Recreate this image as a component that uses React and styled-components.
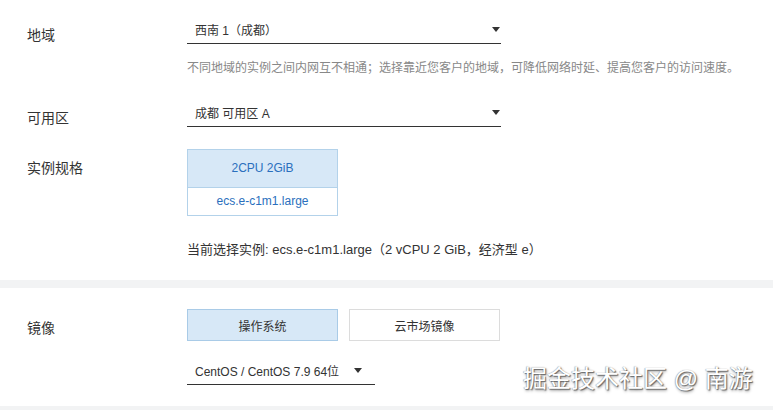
import React from "react";
import styled, { createGlobalStyle } from "styled-components";

const GlobalStyle = createGlobalStyle`
  html, body {
    margin: 0;
    padding: 0;
    background: #fff;
  }
  body {
    font-family: "Liberation Sans", "Noto Sans CJK SC", sans-serif;
    color: #333;
  }
`;

const App = () => {
  return (
    <Page>
      <GlobalStyle />
      <Section pt={16} pb={20}>
        <Row>
          <Label>地域</Label>
          <Field>
            <Select width={314} pr={1}>
              <span>西南 1（成都）</span>
              <Caret />
            </Select>
            <Hint>
              不同地域的实例之间内网互不相通；选择靠近您客户的地域，可降低网络时延、提高您客户的访问速度。
            </Hint>
          </Field>
        </Row>
        <Row mt={21}>
          <Label>可用区</Label>
          <Field>
            <Select width={314} pr={1}>
              <span>成都 可用区 A</span>
              <Caret />
            </Select>
          </Field>
        </Row>
        <Row mt={21}>
          <Label>实例规格</Label>
          <Field>
            <SpecCard>
              <SpecHead>2CPU 2GiB</SpecHead>
              <SpecBody>ecs.e-c1m1.large</SpecBody>
            </SpecCard>
            <Current>
              当前选择实例: ecs.e-c1m1.large（2 vCPU 2 GiB，经济型 e）
            </Current>
          </Field>
        </Row>
      </Section>
      <Band />
      <Section pt={21} pb={21}>
        <Row>
          <Label>镜像</Label>
          <Field>
            <Tabs>
              <TabButton active>操作系统</TabButton>
              <TabButton>云市场镜像</TabButton>
            </Tabs>
            <Select width={188} pr={13} mt={16}>
              <span>CentOS / CentOS 7.9 64位</span>
              <Caret />
            </Select>
          </Field>
        </Row>
      </Section>
      <Band />
      <Watermark>掘金技术社区 @ 南游</Watermark>
    </Page>
  );
};

const Page = styled.div`
  position: relative;
  width: 773px;
  height: 410px;
  overflow: hidden;
  background: #fff;
`;

const Section = styled.div`
  padding: ${(p) => p.pt}px 0 ${(p) => p.pb}px;
`;

const Band = styled.div`
  height: 8px;
  background: #f2f3f4;
`;

const Row = styled.div`
  display: grid;
  grid-template-columns: 187px 1fr;
  margin-top: ${(p) => p.mt || 0}px;
`;

const Label = styled.div`
  padding: 9px 0 0 27px;
  font-size: 14px;
  line-height: 20px;
  color: #333;
`;

const Field = styled.div`
  display: flex;
  flex-direction: column;
  align-items: flex-start;
`;

const Select = styled.div`
  box-sizing: border-box;
  width: ${(p) => p.width}px;
  height: 28px;
  margin-top: ${(p) => p.mt || 0}px;
  padding: 0 ${(p) => p.pr}px 0 8px;
  display: flex;
  align-items: center;
  justify-content: space-between;
  border-bottom: 1px solid #333;
  font-size: 12px;
  color: #333;
`;

const Caret = styled.i`
  width: 0;
  height: 0;
  border-left: 4px solid transparent;
  border-right: 4px solid transparent;
  border-top: 5px solid #333;
`;

const Hint = styled.div`
  margin-top: 14px;
  font-size: 12px;
  line-height: 20px;
  color: #888;
  white-space: nowrap;
`;

const SpecCard = styled.div`
  width: 151px;
  border: 1px solid #b3d2ea;
  box-sizing: border-box;
  font-size: 12px;
  color: #2a6fbd;
  text-align: center;
`;

const SpecHead = styled.div`
  height: 37px;
  line-height: 37px;
  background: #d7e8f7;
  border-bottom: 1px solid #b3d2ea;
`;

const SpecBody = styled.div`
  height: 27px;
  line-height: 27px;
  background: #fff;
`;

const Current = styled.div`
  margin-top: 24px;
  font-size: 13px;
  line-height: 20px;
  color: #333;
  white-space: nowrap;
`;

const Tabs = styled.div`
  display: flex;
  gap: 11px;
`;

const TabButton = styled.div`
  box-sizing: border-box;
  width: 151px;
  height: 32px;
  display: flex;
  align-items: center;
  justify-content: center;
  font-size: 12px;
  color: #333;
  background: ${(p) => (p.active ? "#d7e8f7" : "#fff")};
  border: 1px solid ${(p) => (p.active ? "#a9cbe7" : "#dcdcdc")};
`;

const Watermark = styled.div`
  position: absolute;
  left: 523px;
  top: 364px;
  font-size: 24px;
  line-height: 30px;
  color: #fff;
  white-space: nowrap;
  text-shadow: 1px 1px 1px #666, -0.5px -0.5px 1px #999, 1px 2px 3px rgba(0, 0, 0, 0.35);
`;

export default App;
